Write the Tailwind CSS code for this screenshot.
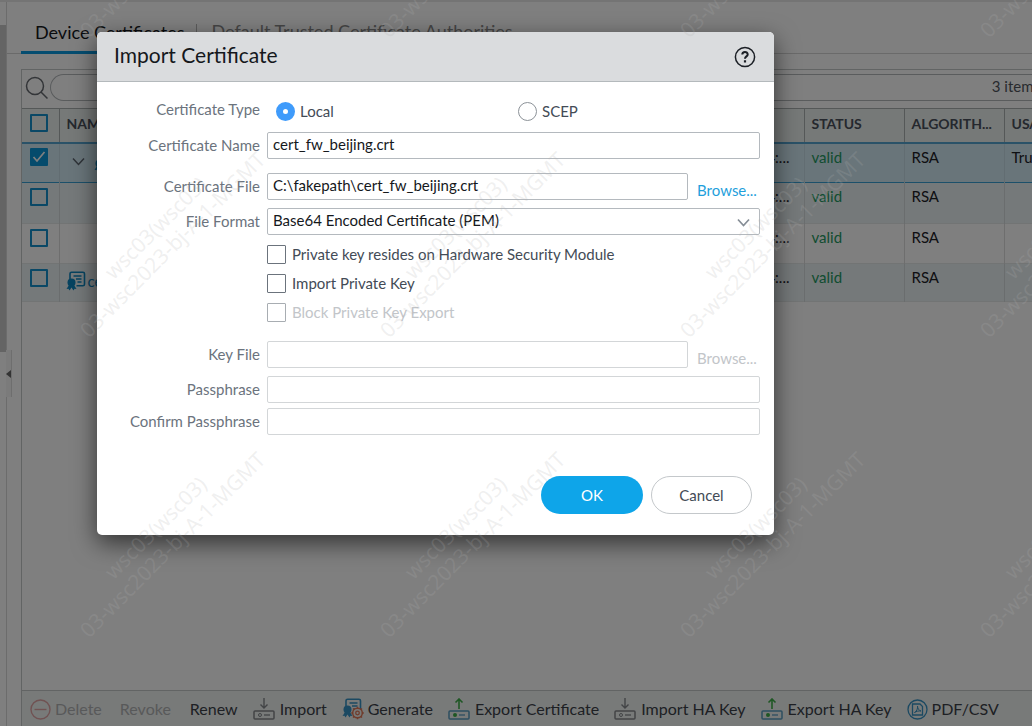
<!DOCTYPE html>
<html lang="en">
<head>
<meta charset="utf-8">
<meta name="viewport" content="width=device-width, initial-scale=1">
<title>Device Certificates</title>
<script src="https://cdn.jsdelivr.net/npm/@tailwindcss/browser@4"></script>
</head>
<body class="relative h-screen overflow-hidden bg-white font-['Lato','Liberation_Sans',sans-serif] text-[15px] text-[#1c2026]">

<!-- Shared icons -->
<svg class="hidden" aria-hidden="true">
  <symbol id="cert" viewBox="0 0 20 20">
    <path d="M4 9V2.800a1.600 1.600 0 0 1 1.600-1.600h11.300a1.600 1.600 0 0 1 1.600 1.600v10.400a1.600 1.600 0 0 1-1.600 1.600H10.500" fill="none" stroke="currentColor" stroke-width="1.600"/>
    <path d="M7.500 5h8M10 8h5.500M11.500 11h4" stroke="currentColor" stroke-width="1.500" fill="none"/>
    <circle cx="5.500" cy="11.500" r="4" fill="currentColor"/>
    <path d="M3 14 .5 18l2-.2 1 1.800 2-3 2 3 1-1.800 2 .2-2.500-4z" fill="currentColor"/>
  </symbol>
  <symbol id="device" viewBox="0 0 22 22">
    <rect x="1" y="13" width="20" height="8" rx="1" fill="none" stroke="currentColor" stroke-width="1.500"/>
    <path d="M11 17h6" stroke="currentColor" stroke-width="1.300"/>
  </symbol>
</svg>

<div class="flex h-full border-t-2 border-[#e8e8e8]">
  <!-- Collapsed side bar -->
  <aside class="relative w-[7px] shrink-0 border-r border-[#d8d8d8]">
    <div class="mt-[23px] h-[327px] bg-[#c9c9c9]"></div>
    <button aria-label="Expand side bar" class="absolute left-[6px] top-[348px] flex h-[47px] w-[6px] items-center border-r border-[#dcdcdc] bg-[#f6f6f6]">
      <svg class="h-2 w-[5px]" viewBox="0 0 5 8"><path d="M5 0v8L0 4z" fill="#666"/></svg>
    </button>
  </aside>

  <main class="flex min-w-0 flex-1 flex-col pl-[14px]">
    <nav class="-ml-[14px] flex h-[52px] shrink-0 items-stretch border-b border-[#d4d4d4] pl-[14px] text-[18px]">
      <a href="#" class="-mb-px flex items-center border-b-[3px] border-[#0a9be0] pl-[14px] pr-3 pt-3 text-[#15181c]">Device Certificates</a>
      <span class="mt-[22px] h-4 w-px bg-[#b8b8b8]"></span>
      <a href="#" class="flex items-center px-[14px] pt-2 text-[#8a8a8a]">Default Trusted Certificate Authorities</a>
    </nav>

    <section class="mt-[15px] flex min-h-0 flex-1 flex-col overflow-hidden border-l border-t border-[#c4c8c8]">
      <div class="flex h-[38px] shrink-0 items-start pt-1">
        <svg class="ml-[3px] mt-[2px] h-6 w-6 shrink-0" viewBox="0 0 24 24" fill="none" stroke="#666a70" stroke-width="1.500"><circle cx="10" cy="10" r="8.500"/><path d="m16 16 6.500 6.500"/></svg>
        <input aria-label="Filter" class="ml-px h-[27px] min-w-0 flex-1 rounded-l-full border border-r-0 border-[#b4b8bb] pl-4">
        <span class="-mr-2 flex h-[27px] items-center whitespace-nowrap border-y border-[#b4b8bb] pb-[2px] text-[#50555c]">3 items</span>
      </div>

      <table class="w-[calc(100%+72px)] shrink-0 table-fixed border-collapse text-left">
        <colgroup><col class="w-[37px]"><col><col class="w-[100px]"><col class="w-[100px]"><col class="w-[100px]"><col class="w-[100px]"></colgroup>
        <thead>
          <tr class="h-[34px] border-b-2 border-t border-b-[#55a5d0] border-t-[#aab0b0] bg-[#edf2f0] text-[14px] font-bold text-[#4a515c]">
            <th class="border-r border-[#aab0b0] pb-1 pl-2"><input type="checkbox" aria-label="Select all" class="block size-[18px] appearance-none rounded-[1px] border-2 border-[#1591cc]"></th>
            <th class="border-r border-[#aab0b0] pb-[3px] pl-[7px]">NAME</th>
            <th class="border-r border-[#aab0b0]"></th>
            <th class="border-r border-[#aab0b0] pb-[3px] pl-[7px]">STATUS</th>
            <th class="border-r border-[#aab0b0] pb-[3px] pl-[7px]">ALGORITH...</th>
            <th class="pb-[3px] pl-[7px]">USAGE</th>
          </tr>
        </thead>
        <tbody class="align-top leading-5">
          <tr class="h-10 border-b border-[#38a0d4] bg-[#d3eaf4]">
            <td class="border-r border-[#c4dbe4] pl-2 pt-1">
              <span class="relative block size-[18px]"><input type="checkbox" checked aria-label="Select row 1" class="block size-[18px] appearance-none rounded-[1px] bg-[#0a96d8]"><svg class="pointer-events-none absolute inset-0" viewBox="0 0 18 18" fill="none" stroke="#fff" stroke-width="1.700"><path d="m3.500 9 3.500 4 7.500-9"/></svg></span>
            </td>
            <td class="border-r border-[#c4dbe4] pl-3 pt-2"><span class="flex items-center gap-[9px]"><svg class="h-[9px] w-[13px]" viewBox="0 0 13 9" fill="none" stroke="#5c6670" stroke-width="1.500"><path d="m1 1.500 5.500 6 5.500-6"/></svg><svg class="size-5 text-[#0d86c0]"><use href="#cert"/></svg></span></td>
            <td class="border-r border-[#c4dbe4] pr-[14px] pt-[3px] text-right">4:...</td>
            <td class="border-r border-[#c4dbe4] pl-[7px] pt-[3px] text-[#1f9a62]">valid</td>
            <td class="border-r border-[#c4dbe4] pl-[7px] pt-[3px]">RSA</td>
            <td class="pl-[7px] pt-[3px]">Trusted</td>
          </tr>
          <tr class="h-[41px] border-b border-[#e4e8e8] bg-[#eaf2f4]">
            <td class="border-r border-[#d4dadc] pl-2 pt-[5px]"><input type="checkbox" aria-label="Select row 2" class="block size-[18px] appearance-none rounded-[1px] border-2 border-[#1591cc]"></td>
            <td class="border-r border-[#d4dadc]"></td>
            <td class="border-r border-[#d4dadc] pr-[14px] pt-[3px] text-right">4:...</td>
            <td class="border-r border-[#d4dadc] pl-[7px] pt-[3px] text-[#1f9a62]">valid</td>
            <td class="border-r border-[#d4dadc] pl-[7px] pt-[3px]">RSA</td>
            <td></td>
          </tr>
          <tr class="h-10 border-b border-[#e4e8e8]">
            <td class="border-r border-[#dcdcdc] pl-2 pt-[5px]"><input type="checkbox" aria-label="Select row 3" class="block size-[18px] appearance-none rounded-[1px] border-2 border-[#1591cc]"></td>
            <td class="border-r border-[#dcdcdc]"></td>
            <td class="border-r border-[#dcdcdc] pr-[14px] pt-[3px] text-right">4:...</td>
            <td class="border-r border-[#dcdcdc] pl-[7px] pt-[3px] text-[#1f9a62]">valid</td>
            <td class="border-r border-[#dcdcdc] pl-[7px] pt-[3px]">RSA</td>
            <td></td>
          </tr>
          <tr class="h-[38px] border-b border-[#e4e8e8] bg-[#eaf2f4]">
            <td class="border-r border-[#d4dadc] pl-2 pt-[5px]"><input type="checkbox" aria-label="Select row 4" class="block size-[18px] appearance-none rounded-[1px] border-2 border-[#1591cc]"></td>
            <td class="border-r border-[#d4dadc] pl-[6px] pt-[7px]"><a href="#" class="flex items-center gap-[2px] text-[#0d86c0]"><svg class="size-5"><use href="#cert"/></svg>cert</a></td>
            <td class="border-r border-[#d4dadc] pr-[14px] pt-[3px] text-right">4:...</td>
            <td class="border-r border-[#d4dadc] pl-[7px] pt-[3px] text-[#1f9a62]">valid</td>
            <td class="border-r border-[#d4dadc] pl-[7px] pt-[3px]">RSA</td>
            <td></td>
          </tr>
        </tbody>
      </table>

      <footer class="mt-auto flex h-9 shrink-0 items-center gap-[15px] whitespace-nowrap border-t border-[#c4c8c8] bg-[#f0f4f3] pl-2 pt-px text-[16px] text-[#3c4148]">
        <button disabled class="flex items-center gap-1 text-[#b0b2b4]"><svg class="size-[21px]" viewBox="0 0 21 21" fill="none" stroke="#e0a4a4" stroke-width="1.400"><circle cx="10.500" cy="10.500" r="9.500"/><path d="M4.500 10.500h12"/></svg>Delete</button>
        <button disabled class="ml-[3px] text-[#b0b2b4]">Revoke</button>
        <button class="ml-1">Renew</button>
        <button class="flex items-center gap-[5px]"><svg class="size-[22px] text-[#85888c]" viewBox="0 0 22 22"><use href="#device"/><circle cx="7" cy="17" r="1.500" fill="none" stroke="currentColor"/><path d="M11 0v10M7.500 6.500 11 10l3.500-3.500" fill="none" stroke="currentColor" stroke-width="1.400"/></svg>Import</button>
        <button class="flex items-center gap-1"><svg class="size-[22px]" viewBox="0 0 22 22"><use href="#cert" width="20" height="20" color="#3793c4"/><circle cx="15.500" cy="15" r="4.800" fill="#f0f4f3" stroke="#e07858" stroke-width="1.500"/><circle cx="15.500" cy="15" r="1.800" fill="none" stroke="#e07858" stroke-width="1.300"/><path d="M15.500 8.700v1.800M15.500 19.500v1.800M9.200 15H11M20 15h1.800M11 10.500l1.300 1.300M18.700 18.200l1.300 1.300M11 19.500l1.300-1.300M18.700 11.800l1.300-1.300" stroke="#e07858" stroke-width="1.500"/></svg>Generate</button>
        <button class="flex items-center gap-[5px]"><svg class="size-[22px] text-[#5a9cc0]" viewBox="0 0 22 22"><use href="#device"/><circle cx="7" cy="17" r="2" fill="#3fae49"/><path d="M11 11V1M7.500 4.500 11 1l3.500 3.500" fill="none" stroke="#3fae49" stroke-width="1.600"/></svg>Export Certificate</button>
        <button class="flex items-center gap-[5px]"><svg class="size-[22px] text-[#85888c]" viewBox="0 0 22 22"><use href="#device"/><circle cx="7" cy="17" r="1.500" fill="none" stroke="currentColor"/><path d="M11 0v10M7.500 6.500 11 10l3.500-3.500" fill="none" stroke="currentColor" stroke-width="1.400"/></svg>Import HA Key</button>
        <button class="flex items-center gap-[5px]"><svg class="size-[22px] text-[#5a9cc0]" viewBox="0 0 22 22"><use href="#device"/><circle cx="7" cy="17" r="2" fill="#3fae49"/><path d="M11 11V1M7.500 4.500 11 1l3.500 3.500" fill="none" stroke="#3fae49" stroke-width="1.600"/></svg>Export HA Key</button>
        <button class="flex items-center gap-1"><svg class="size-[21px]" viewBox="0 0 21 21" fill="none" stroke="#3793c4" stroke-width="1.300"><circle cx="10.500" cy="10.500" r="9.500"/><path d="M5.500 5h7.500l2.500 2.500v8.500h-10z"/><path d="M7.500 13.500c2-1 3.500-4 3-6.500 0 2.500 1.500 4.500 3.500 5-2.500-.3-4.500.3-6.500 1.500z" stroke-width="1"/></svg>PDF/CSV</button>
      </footer>
    </section>
  </main>
</div>

<!-- Modal mask -->
<div class="absolute inset-0 bg-black/50"></div>

<!-- Import dialog -->
<form role="dialog" aria-labelledby="dlg-title" class="absolute left-[97px] top-8 w-[677px] max-w-[calc(100%-97px)] overflow-hidden rounded-[5px] bg-white text-[15px] text-[#434b56] shadow-[0_8px_24px_rgba(0,0,0,0.6)]">
  <header class="flex h-[50px] items-center justify-between border-b border-[#b4b9bc] bg-[#dadcde] pl-[17px] pr-[18px]">
    <h1 id="dlg-title" class="pb-[3px] text-[21px] text-[#15181c]">Import Certificate</h1>
    <button type="button" aria-label="Help"><svg class="size-[22px]" viewBox="0 0 22 22" fill="none" stroke="#1c2026"><circle cx="11" cy="11" r="9.600" stroke-width="1.500"/><path d="M8.300 8.600c0-3.400 5.400-3.400 5.400-.2 0 2-2.700 2-2.700 4.400" stroke-width="2"/><path d="M11 14.300v2.200" stroke-width="2.200"/></svg></button>
  </header>

  <div class="grid grid-cols-[163px_1fr] gap-x-[7px] pb-[21px] pr-[14px] pt-[18px]">
    <span id="type" class="text-right leading-[18px] text-[#6b737d]">Certificate Type</span>
    <div role="radiogroup" aria-labelledby="type" class="grid h-5 grid-cols-[242px_1fr] items-center pl-[9px]">
      <label class="flex items-center gap-[5px]"><input type="radio" name="type" checked class="size-[19px] appearance-none rounded-full border-[7px] border-[#3f9bfb] bg-white">Local</label>
      <label class="flex items-center gap-[5px]"><input type="radio" name="type" class="size-[19px] appearance-none rounded-full border border-[#8c9298] bg-white">SCEP</label>
    </div>

    <label for="name" class="mt-3 text-right leading-[27px] text-[#6b737d]">Certificate Name</label>
    <input id="name" value="cert_fw_beijing.crt" class="mt-3 h-[27px] min-w-0 rounded-[2px] border border-[#b4b9be] px-[5px] pb-[3px] text-[#15181c]">

    <label for="file" class="mt-[14px] text-right leading-[27px] text-[#6b737d]">Certificate File</label>
    <div class="mt-[14px] flex">
      <input id="file" value="C:\fakepath\cert_fw_beijing.crt" class="h-[27px] min-w-0 flex-1 rounded-[2px] border border-[#b4b9be] px-[5px] pb-[3px] text-[#15181c]">
      <button type="button" class="h-[27px] w-[72px] pl-[6px] pt-[6px] leading-5 text-[#1f9fdc]">Browse...</button>
    </div>

    <label for="format" class="mt-2 text-right leading-[27px] text-[#6b737d]">File Format</label>
    <div class="relative mt-2">
      <select id="format" class="block h-[27px] w-full appearance-none rounded-[2px] border border-[#b4b9be] bg-white px-[5px] pb-[3px] text-[#15181c]"><option>Base64 Encoded Certificate (PEM)</option></select>
      <svg class="pointer-events-none absolute right-[10px] top-[10px] h-[9px] w-[13px]" viewBox="0 0 13 9" fill="none" stroke="#868e96" stroke-width="1.700"><path d="m1 1.500 5.500 6 5.500-6"/></svg>
    </div>

    <div class="col-start-2 mt-[10px] flex flex-col gap-[10px]">
      <label class="flex h-[19px] items-center gap-[6px]"><input type="checkbox" class="size-[19px] appearance-none rounded-[1px] border border-[#6b737c]">Private key resides on Hardware Security Module</label>
      <label class="flex h-[19px] items-center gap-[6px]"><input type="checkbox" class="size-[19px] appearance-none rounded-[1px] border border-[#6b737c]">Import Private Key</label>
      <label class="flex h-[19px] items-center gap-[6px] text-[#c2c5c9]"><input type="checkbox" disabled class="size-[19px] appearance-none rounded-[1px] border border-[#a8adb2]">Block Private Key Export</label>
    </div>

    <label for="keyfile" class="mt-[19px] text-right leading-[27px] text-[#6b737d]">Key File</label>
    <div class="mt-[19px] flex">
      <input id="keyfile" disabled class="h-[27px] min-w-0 flex-1 rounded-[2px] border border-[#d3d6d8] bg-white px-[5px]">
      <button type="button" disabled class="h-[27px] w-[72px] pl-[6px] pt-[6px] leading-5 text-[#c2c5c9]">Browse...</button>
    </div>

    <label for="pass" class="mt-2 text-right leading-[27px] text-[#6b737d]">Passphrase</label>
    <input id="pass" type="password" disabled class="mt-2 h-[27px] min-w-0 rounded-[2px] border border-[#d3d6d8] bg-white px-[5px]">

    <label for="confirm" class="mt-[5px] text-right leading-[27px] text-[#6b737d]">Confirm Passphrase</label>
    <input id="confirm" type="password" disabled class="mt-[5px] h-[27px] min-w-0 rounded-[2px] border border-[#d3d6d8] bg-white px-[5px]">

    <div class="col-span-2 mt-[41px] flex justify-end gap-2 pr-2">
      <button type="submit" class="h-[38px] w-[102px] rounded-full bg-[#0ea5e9] text-white">OK</button>
      <button type="button" class="h-[38px] w-[101px] rounded-full border border-[#c4c8cb] bg-white">Cancel</button>
    </div>
  </div>
</form>

<!-- Session watermark, one mark per 300px cell -->
<div aria-hidden="true" class="pointer-events-none absolute inset-0 overflow-hidden pl-[14px]">
  <div class="-mt-[214px] grid auto-rows-[300px] grid-cols-[repeat(4,300px)] place-items-center whitespace-nowrap text-center font-['Noto_Sans',sans-serif] text-[21px] leading-6 text-[#b0b0b0]/20">
    <p class="-rotate-45">wsc03(wsc03)<br>03-wsc2023-bj-A-1-MGMT</p>
    <p class="-rotate-45">wsc03(wsc03)<br>03-wsc2023-bj-A-1-MGMT</p>
    <p class="-rotate-45">wsc03(wsc03)<br>03-wsc2023-bj-A-1-MGMT</p>
    <p class="-rotate-45">wsc03(wsc03)<br>03-wsc2023-bj-A-1-MGMT</p>
    <p class="-rotate-45">wsc03(wsc03)<br>03-wsc2023-bj-A-1-MGMT</p>
    <p class="-rotate-45">wsc03(wsc03)<br>03-wsc2023-bj-A-1-MGMT</p>
    <p class="-rotate-45">wsc03(wsc03)<br>03-wsc2023-bj-A-1-MGMT</p>
    <p class="-rotate-45">wsc03(wsc03)<br>03-wsc2023-bj-A-1-MGMT</p>
    <p class="-rotate-45">wsc03(wsc03)<br>03-wsc2023-bj-A-1-MGMT</p>
    <p class="-rotate-45">wsc03(wsc03)<br>03-wsc2023-bj-A-1-MGMT</p>
    <p class="-rotate-45">wsc03(wsc03)<br>03-wsc2023-bj-A-1-MGMT</p>
    <p class="-rotate-45">wsc03(wsc03)<br>03-wsc2023-bj-A-1-MGMT</p>
  </div>
</div>
</body>
</html>
